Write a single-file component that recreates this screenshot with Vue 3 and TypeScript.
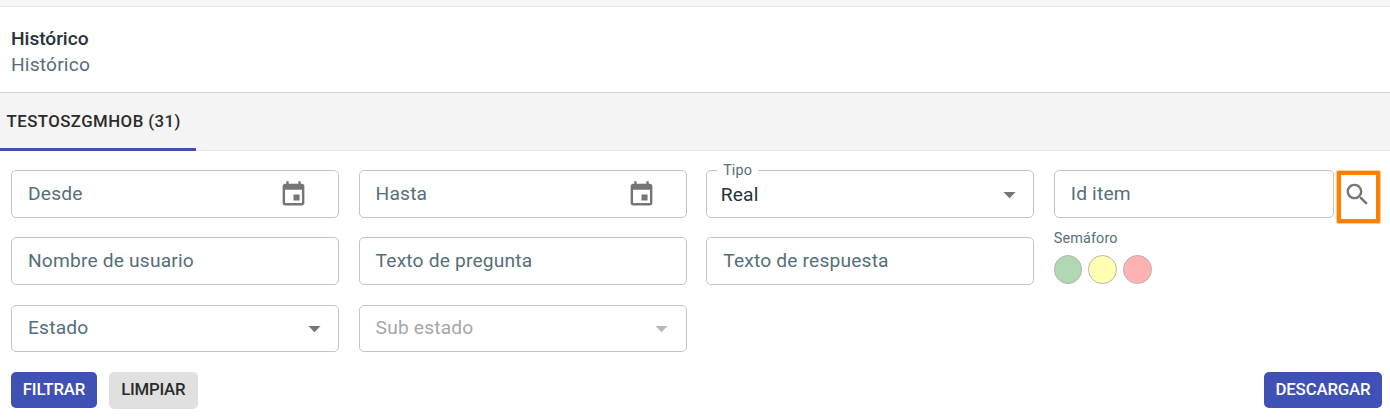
<script setup lang="ts">
interface Field {
  label: string
  kind: 'text' | 'date' | 'select'
  value?: string
  disabled?: boolean
}

const firstRow: Field[] = [
  { label: 'Desde', kind: 'date' },
  { label: 'Hasta', kind: 'date' },
  { label: 'Tipo', kind: 'select', value: 'Real' },
]
const secondRow: Field[] = [
  { label: 'Nombre de usuario', kind: 'text' },
  { label: 'Texto de pregunta', kind: 'text' },
  { label: 'Texto de respuesta', kind: 'text' },
]
const thirdRow: Field[] = [
  { label: 'Estado', kind: 'select' },
  { label: 'Sub estado', kind: 'select', disabled: true },
]
const rows = [firstRow, secondRow, thirdRow]
const lights = ['green', 'yellow', 'red']
</script>

<template>
  <main class="page">
    <div class="strip"></div>
    <header class="heading">
      <h1>Histórico</h1>
      <p>Histórico</p>
    </header>
    <nav class="tabs">
      <button class="tab">TESTOSZGMHOB (31)</button>
    </nav>
    <section class="filters">
      <div v-for="(row, i) in rows" :key="i" class="row">
        <div
          v-for="f in row"
          :key="f.label"
          class="field"
          :class="[f.kind, { disabled: f.disabled, filled: f.value }]"
        >
          <span v-if="f.value" class="legend">{{ f.label }}</span>
          <span class="content">{{ f.value ?? f.label }}</span>
          <svg v-if="f.kind === 'date'" class="icon" viewBox="0 0 24 24">
            <path d="M17 12h-5v5h5v-5zM16 1v2H8V1H6v2H5c-1.11 0-1.99.9-1.99 2L3 19c0 1.1.89 2 2 2h14c1.1 0 2-.9 2-2V5c0-1.1-.9-2-2-2h-1V1h-2zm3 18H5V8h14v11z" />
          </svg>
          <svg v-else-if="f.kind === 'select'" class="icon" viewBox="0 0 24 24">
            <path d="M7 10l5 5 5-5z" />
          </svg>
        </div>
        <div v-if="i === 0" class="search">
          <div class="field text"><span class="content">Id item</span></div>
          <button class="find" aria-label="Buscar">
            <svg class="icon" viewBox="0 0 24 24">
              <path d="M15.5 14h-.79l-.28-.27C15.41 12.59 16 11.11 16 9.5 16 5.91 13.09 3 9.5 3S3 5.91 3 9.5 5.91 16 9.5 16c1.61 0 3.09-.59 4.23-1.57l.27.28v.79l5 4.99L20.49 19l-4.99-5zm-6 0C7.01 14 5 11.99 5 9.5S7.01 5 9.5 5 14 7.01 14 9.5 11.99 14 9.5 14z" />
            </svg>
          </button>
        </div>
        <div v-if="i === 1" class="semaphore">
          <span class="caption">Semáforo</span>
          <div class="lights">
            <i v-for="l in lights" :key="l" class="light" :class="l"></i>
          </div>
        </div>
      </div>
    </section>
    <footer class="actions">
      <button class="btn primary filter">FILTRAR</button>
      <button class="btn plain">LIMPIAR</button>
      <button class="btn primary download">DESCARGAR</button>
    </footer>
  </main>
</template>

<style>
body {
  margin: 0;
  background: #fff;
}
</style>

<style scoped>
.page {
  height: 417px;
  overflow: hidden;
  font-family: Roboto, sans-serif;
  color: #263238;
  background: #fff;
}
.page *,
.page {
  box-sizing: border-box;
}
button {
  font-family: inherit;
  border: 0;
  padding: 0;
  margin: 0;
}
.strip {
  height: 7px;
  background: #f4f6f8;
  border-bottom: 1px solid #e6e6e6;
}
.heading {
  height: 86px;
  padding: 19px 11px 0;
  border-bottom: 1px solid #d0d0d0;
}
.heading h1,
.heading p {
  margin: 0;
  font-size: 19.2px;
  line-height: 26px;
  font-weight: 500;
  letter-spacing: -0.06px;
}
.heading p {
  font-weight: 400;
  color: #546e7a;
  letter-spacing: 0.18px;
}
.tabs {
  display: flex;
  height: 58px;
  background: #f4f4f4;
  border-bottom: 1px solid #e6e6e6;
}
.tab {
  width: 196px;
  height: 58px;
  padding: 0 0 0 6.5px;
  text-align: left;
  font-size: 16.8px;
  font-weight: 500;
  letter-spacing: 0.46px;
  color: #2b2b2b;
  background: transparent;
  border-bottom: 3px solid #3f51b5;
}
.filters {
  display: grid;
  grid-template-rows: 48px 49px 47px;
  row-gap: 19px;
  padding: 19px 8px 0 11px;
}
.row {
  display: grid;
  grid-template-columns: repeat(3, 328px) 1fr;
  column-gap: 19.6px;
  align-items: start;
}
.field {
  position: relative;
  display: flex;
  align-items: center;
  height: 48px;
  border: 1px solid #c4c4c4;
  border-radius: 5px;
  padding: 0 9px 0 16px;
  font-size: 19.2px;
  letter-spacing: 0.18px;
  color: #546e7a;
}
.row:last-child .field {
  height: 47px;
}
.row:last-child .content {
  padding-bottom: 2px;
}
.field.filled {
  padding-left: 13.5px;
  color: #263238;
}
.field.date {
  padding-right: 30px;
}
.content {
  flex: 1;
  line-height: 22px;
}
.filled .content {
  padding-top: 2px;
}
.legend {
  position: absolute;
  top: -9px;
  left: 10px;
  padding: 0 6.5px 0 6px;
  font-size: 14.4px;
  line-height: 17px;
  letter-spacing: 0.1px;
  color: #546e7a;
  background: #fff;
}
.icon {
  width: 29px;
  height: 29px;
  fill: #757575;
  flex: none;
}
.disabled {
  color: #a6a6a6;
}
.disabled .icon {
  fill: #b8b8b8;
  margin-right: 0.6px;
}
.search {
  display: flex;
  align-items: flex-start;
}
.search .field {
  width: 280px;
  flex: none;
}
.find {
  width: 43px;
  height: 52px;
  flex: none;
  margin: 1px 0 0 3.2px;
  padding: 5px 0 0 2px;
  display: flex;
  background: #fff;
  border: 4px solid #ff8000;
  border-radius: 1px;
  box-shadow: 0 0 0 1px rgba(255, 128, 0, 0.4);
}
.semaphore {
  display: flex;
  flex-direction: column;
  margin-top: -7px;
}
.caption {
  font-size: 14.4px;
  line-height: 17px;
  letter-spacing: 0.14px;
  color: #546e7a;
}
.lights {
  display: flex;
  gap: 6px;
  margin-top: 8px;
}
.light {
  width: 28.6px;
  height: 28.6px;
  border: 1px solid #b5b5b5;
  border-radius: 50%;
}
.green {
  background: #b2d8b2;
}
.yellow {
  background: #ffffb2;
}
.red {
  background: #ffb2b2;
}
.actions {
  display: flex;
  align-items: flex-start;
  padding: 20px 8px 0 11px;
}
.btn {
  height: 36px;
  padding-bottom: 2px;
  border-radius: 5px;
  font-size: 16.8px;
  font-weight: 500;
  text-align: center;
}
.primary {
  color: #fff;
  background: #3f51b5;
  letter-spacing: -0.15px;
}
.plain {
  width: 89.5px;
  height: 37px;
  margin-left: 11.5px;
  padding-bottom: 3px;
  color: #2b2b2b;
  background: #e0e0e0;
  letter-spacing: -0.25px;
}
.filter {
  width: 86px;
}
.download {
  width: 118px;
  margin-left: auto;
}
</style>
